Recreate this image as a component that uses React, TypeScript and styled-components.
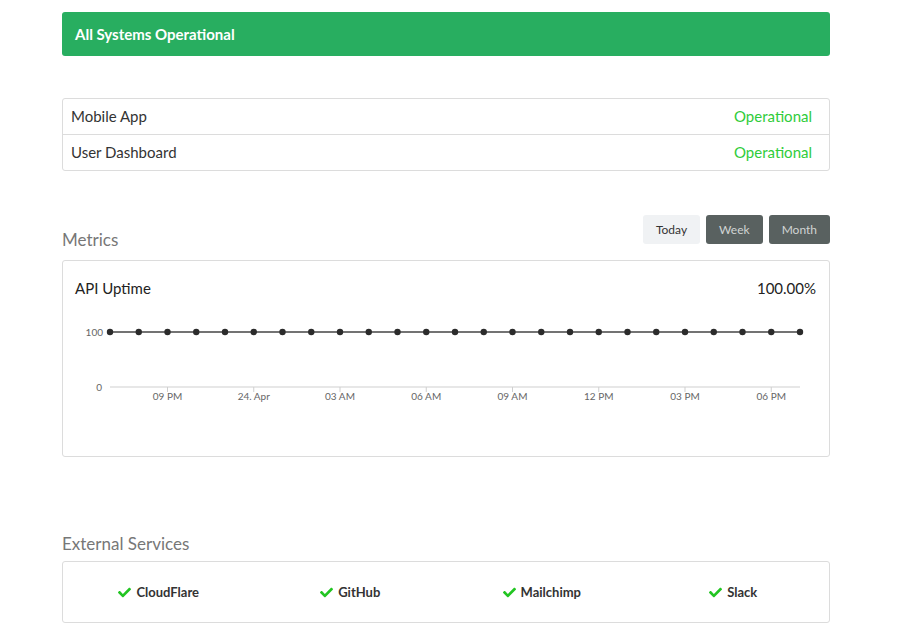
import React from 'react';
import styled, { createGlobalStyle } from 'styled-components';
import { FaCheck } from 'react-icons/fa';

const GlobalStyle = createGlobalStyle`
    body {
        margin: 0;
        background: #ffffff;
        font-family: Lato, "Open Sans", "Liberation Sans", sans-serif;
        color: #333;
    }
`;

const Page = styled.div`
    width: 768px;
    margin-left: 62px;
    padding-top: 12px;
    padding-bottom: 20px;
`;

const Banner = styled.div`
    height: 44px;
    display: flex;
    align-items: center;
    padding-left: 13px;
    background-color: #28ae60;
    border-radius: 3px;
    color: #fff;
    font-size: 15px;
    font-weight: 700;
`;

const ComponentList = styled.div`
    margin-top: 42px;
    border: 1px solid #dcdcdc;
    border-radius: 3px;
`;

const ComponentRow = styled.div`
    height: 35px;
    display: flex;
    align-items: center;
    justify-content: space-between;
    padding: 0 17px 1px 8px;
    box-sizing: border-box;
    font-size: 15px;
    color: #333;
    & + & {
        border-top: 1px solid #dcdcdc;
        height: 36px;
    }
`;

const Status = styled.span`
    color: #2fcc3a;
`;

const SectionHeader = styled.div<{ $top: number; $gap: number }>`
    margin-top: ${p => p.$top}px;
    display: flex;
    align-items: flex-end;
    justify-content: space-between;
    padding-bottom: ${p => p.$gap}px;
`;

const SectionTitle = styled.div`
    font-size: 17px;
    color: #777;
    line-height: 20px;
`;

const ButtonGroup = styled.div`
    display: flex;
    gap: 6px;
    margin-bottom: 6px;
`;

const RangeButton = styled.button<{ $active?: boolean }>`
    height: 29px;
    padding: 0 13px;
    border: none;
    border-radius: 3px;
    font-family: inherit;
    font-size: 12px;
    background-color: ${p => (p.$active ? '#f0f2f4' : '#596160')};
    color: ${p => (p.$active ? '#333' : '#d0d4d3')};
`;

const Card = styled.div`
    border: 1px solid #dcdcdc;
    border-radius: 3px;
`;

const MetricCard = styled(Card)`
    height: 197px;
    box-sizing: border-box;
    padding-top: 18px;
`;

const MetricHead = styled.div`
    display: flex;
    justify-content: space-between;
    padding: 0 13px 0 12px;
    font-size: 15px;
    line-height: 18px;
    color: #222;
`;

const Chart = styled.svg`
    display: block;
    margin-top: 9px;
`;

const ServiceCard = styled(Card)`
    height: 60px;
    display: grid;
    grid-template-columns: repeat(4, 1fr);
    align-items: center;
`;

const Service = styled.div`
    display: flex;
    align-items: center;
    justify-content: center;
    gap: 5px;
    font-size: 13px;
    font-weight: 700;
    color: #333;
    svg {
        color: #22c522;
    }
`;

const labels = ['09 PM', '24. Apr', '03 AM', '06 AM', '09 AM', '12 PM', '03 PM', '06 PM'];

function UptimeChart() {
    const x0 = 47;
    const step = 28.75;
    const points = Array.from({ length: 25 }, (_, i) => x0 + i * step);
    return (
        <Chart width={766} height={110}>
            <text x={40} y={30} textAnchor="end" fontSize={10} fill="#666" fontFamily="Lato, sans-serif">100</text>
            <text x={39} y={85} textAnchor="end" fontSize={10} fill="#666" fontFamily="Lato, sans-serif">0</text>
            <line x1={x0} y1={81} x2={737} y2={81} stroke="#cfcfcf" strokeWidth={1} />
            {labels.map((l, i) => {
                const x = x0 + (2 + i * 3) * step;
                return (
                    <g key={l}>
                        <line x1={x} y1={81} x2={x} y2={86} stroke="#cfcfcf" strokeWidth={1} />
                        <text x={x} y={94} textAnchor="middle" fontSize={10} fill="#666" fontFamily="Lato, sans-serif">{l}</text>
                    </g>
                );
            })}
            <line x1={x0} y1={26} x2={737} y2={26} stroke="#444" strokeWidth={1.5} />
            {points.map(x => (
                <circle key={x} cx={x} cy={26} r={3.2} fill="#2b2b2b" />
            ))}
        </Chart>
    );
}

export default function App() {
    return (
        <>
            <GlobalStyle />
            <Page>
                <Banner>All Systems Operational</Banner>

                <ComponentList>
                    <ComponentRow>
                        Mobile App
                        <Status>Operational</Status>
                    </ComponentRow>
                    <ComponentRow>
                        User Dashboard
                        <Status>Operational</Status>
                    </ComponentRow>
                </ComponentList>

                <SectionHeader $top={44} $gap={10}>
                    <SectionTitle>Metrics</SectionTitle>
                    <ButtonGroup>
                        <RangeButton $active>Today</RangeButton>
                        <RangeButton>Week</RangeButton>
                        <RangeButton>Month</RangeButton>
                    </ButtonGroup>
                </SectionHeader>
                <MetricCard>
                    <MetricHead>
                        <span>API Uptime</span>
                        <span>100.00%</span>
                    </MetricHead>
                    <UptimeChart />
                </MetricCard>

                <SectionHeader $top={77} $gap={7}>
                    <SectionTitle>External Services</SectionTitle>
                </SectionHeader>
                <ServiceCard>
                    {['CloudFlare', 'GitHub', 'Mailchimp', 'Slack'].map(s => (
                        <Service key={s}>
                            <FaCheck size={13} />
                            {s}
                        </Service>
                    ))}
                </ServiceCard>
            </Page>
        </>
    );
}
